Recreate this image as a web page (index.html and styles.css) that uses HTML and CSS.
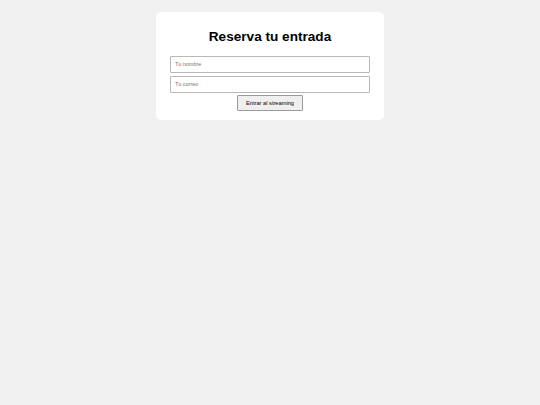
FILE: index.html
```html
<!DOCTYPE html>
<html lang="es">
<head>
<meta charset="utf-8">
<title>Reserva tu entrada</title>
<link rel="stylesheet" href="styles.css">
</head>
<body>
<main class="card">
  <h1 class="title">Reserva tu entrada</h1>
  <form class="form">
    <input class="field" type="text" placeholder="Tu nombre">
    <input class="field" type="email" placeholder="Tu correo">
    <button class="btn" type="button">Entrar al streaming</button>
  </form>
</main>
</body>
</html>
```

FILE: styles.css
```css
html, body {
  margin: 0;
  padding: 0;
  background: #f0f0f0;
  font-family: "Liberation Sans", Arial, sans-serif;
}
.card {
  box-sizing: border-box;
  width: 228px;
  margin: 12px auto 0;
  padding: 14px 14px 9px;
  background: #ffffff;
  border-radius: 5px;
}
.title {
  margin: 3px 0 12px;
  font-size: 13.6px;
  line-height: 15px;
  font-weight: bold;
  text-align: center;
  color: #000;
}
.form {
  display: flex;
  flex-direction: column;
  align-items: center;
}
.field {
  box-sizing: border-box;
  width: 100%;
  height: 16.5px;
  margin: 0 0 3.5px;
  padding: 0 4px;
  border: 1px solid #b8b8b8;
  border-radius: 1px;
  font-family: "Liberation Sans", Arial, sans-serif;
  font-size: 5.5px;
  color: #000;
  background: #fff;
  outline: none;
}
.field::placeholder {
  color: #757575;
}
.btn {
  box-sizing: border-box;
  width: 66px;
  height: 16px;
  margin-top: -1.5px;
  padding: 0;
  border: 1px solid #9a9a9a;
  border-radius: 1px;
  background: #efefef;
  font-family: "Liberation Sans", Arial, sans-serif;
  font-size: 5.7px;
  color: #000;
}
```
